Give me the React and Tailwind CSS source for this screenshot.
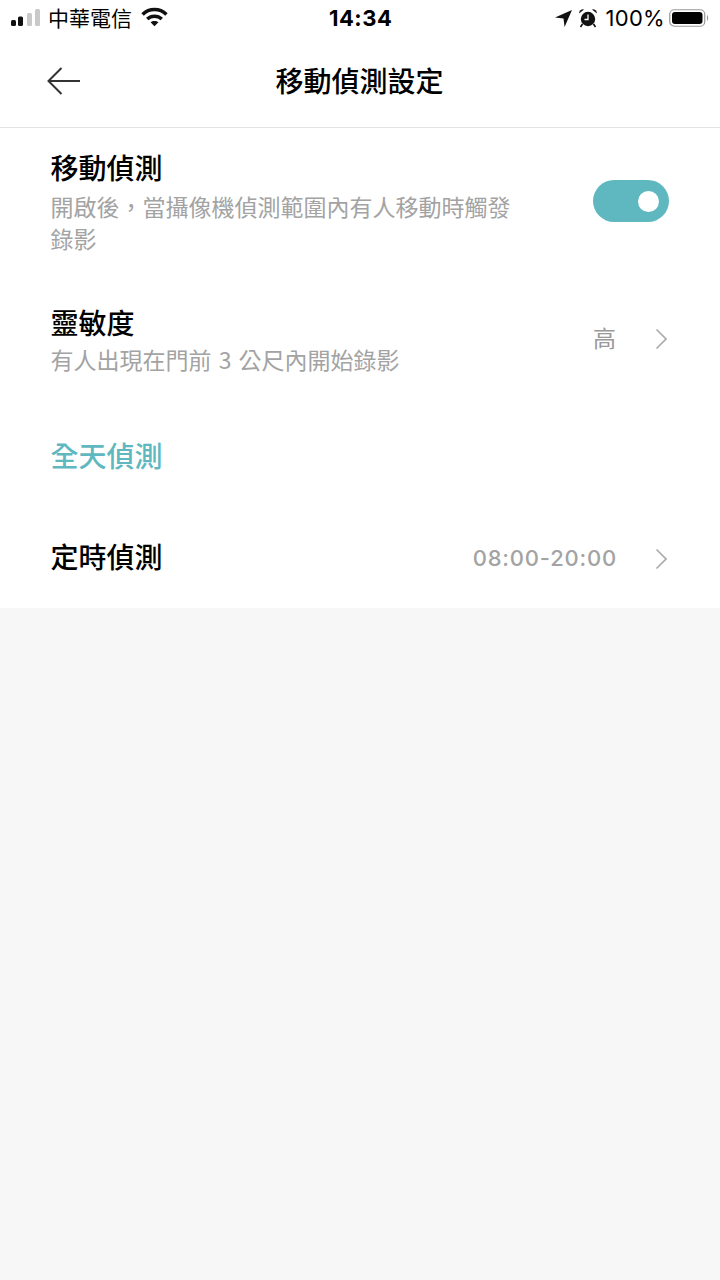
const font = { fontFamily: '"Noto Sans CJK TC", Inter, sans-serif' }

function Chevron() {
  return (
    <svg viewBox="0 0 12 22" className="w-3 h-[22px] ml-[39px]" fill="none" stroke="#aaaaaa" strokeWidth="1.6">
      <path d="M1.5 1.5 L11 11 L1.5 20.5" />
    </svg>
  )
}

function StatusBar() {
  return (
    <div className="h-9 flex items-center justify-between text-black relative">
      <div className="flex items-center">
        <svg viewBox="0 0 30 18" className="w-[30px] h-[18px] ml-[11px]">
          <rect x="0" y="11" width="5" height="6" rx="1.5" fill="#111" />
          <rect x="7" y="7.5" width="5" height="9.5" rx="1.5" fill="#111" />
          <rect x="16" y="4" width="5" height="13" rx="1.5" fill="#c9c9c9" />
          <rect x="24" y="0" width="5" height="17" rx="1.5" fill="#c9c9c9" />
        </svg>
        <span className="text-[21px] leading-none ml-[7px] -mt-[1px]">中華電信</span>
        <svg viewBox="0 0 26 19" className="w-[27px] h-[20px] ml-[9px] -mt-[3px]" fill="none" stroke="#111">
          <path d="M1.5 7 C8 0.8 18 0.8 24.5 7" strokeWidth="3.4" />
          <path d="M6 11.5 C10 7.8 16 7.8 20 11.5" strokeWidth="3.4" />
          <path d="M13 18.5 L9.2 14.6 C11.4 12.8 14.6 12.8 16.8 14.6 Z" fill="#111" stroke="none" />
        </svg>
      </div>
      <span className="absolute left-[329px] top-[6px] text-[22px] leading-[24px] font-bold tracking-[0.5px]" style={{ fontFamily: 'Inter, sans-serif' }}>14:34</span>
      <div className="flex items-center">
        <svg viewBox="0 0 16 16" className="w-[17px] h-[17px]">
          <path d="M16 0 L0 7 L8 8 L9 16 Z" fill="#111" />
        </svg>
        <svg viewBox="0 0 20 20" className="w-5 h-5 ml-[6px]">
          <circle cx="10" cy="11" r="7.2" fill="#111" />
          <path d="M1 5.5 A4 4 0 0 1 6 1.5 Z" fill="#111" />
          <path d="M19 5.5 A4 4 0 0 0 14 1.5 Z" fill="#111" />
          <path d="M4.5 16 L2.5 19 M15.5 16 L17.5 19" stroke="#111" strokeWidth="1.6" />
          <path d="M10 6.5 V11.5 H6.5" stroke="#fff" strokeWidth="1.3" fill="none" />
        </svg>
        <span className="text-[22px] leading-none ml-[7px] tracking-[0.3px]" style={{ fontFamily: 'Inter, sans-serif' }}>100%</span>
        <svg viewBox="0 0 44 20" className="w-11 h-5 ml-[4px] mr-[7px]">
          <rect x="0.75" y="1.75" width="35" height="16.5" rx="4.5" fill="none" stroke="#999" strokeWidth="1.2" />
          <rect x="3" y="4" width="30.5" height="12" rx="3" fill="#000" />
          <path d="M38 7 C39.5 7.5 39.5 12.5 38 13 Z" fill="#999" />
        </svg>
      </div>
    </div>
  )
}

export default function App() {
  return (
    <div className="w-[720px] h-[1280px] bg-[#f7f7f7] flex flex-col" style={font}>
      <div className="bg-white">
        <StatusBar />
        <header className="h-[92px] relative flex items-center justify-center border-b border-[#e3e3e3]">
          <svg viewBox="0 0 34 28" className="absolute left-[47px] top-[31px] w-[34px] h-7" fill="none" stroke="#333" strokeWidth="2">
            <path d="M33 14 H1.5 M14.5 1 L1.5 14 L14.5 27" />
          </svg>
          <h1 className="text-[28px] leading-none font-medium text-black -mt-[3px] -ml-[1px]">移動偵測設定</h1>
        </header>

        <div className="h-[152px] pl-[50.5px] pr-[51px] flex justify-between">
          <div>
            <p className="text-[28px] leading-[30px] font-medium text-black mt-[24px]">移動偵測</p>
            <p className="w-[470px] text-[23px] leading-[32px] text-[#a3a3a3] mt-[8px]">開啟後，當攝像機偵測範圍內有人移動時觸發錄影</p>
          </div>
          <div className="w-[76px] h-[42px] mt-[52px] rounded-full bg-[#5fb8c0] flex items-center justify-end pr-[10px]">
            <div className="w-[21px] h-[21px] rounded-full bg-white" />
          </div>
        </div>

        <div className="h-[123px] pb-[3px] pl-[50.5px] pr-[53px] flex justify-between items-center">
          <div>
            <p className="text-[28px] leading-[30px] font-medium text-black">靈敏度</p>
            <p className="text-[23px] leading-[30px] text-[#a3a3a3] mt-[7px] [word-spacing:2px]">有人出現在門前 3 公尺內開始錄影</p>
          </div>
          <div className="flex items-center text-[23px] text-[#999999] -mt-[2px]">
            <span className="-mt-[4px]">高</span>
            <Chevron />
          </div>
        </div>

        <div className="h-[104px] pl-[50.5px] flex items-center">
          <p className="text-[28px] font-medium text-[#5fb8c0]">全天偵測</p>
        </div>

        <div className="h-[101px] pb-[4px] pl-[50.5px] pr-[53px] flex justify-between items-center">
          <p className="text-[28px] font-medium text-black">定時偵測</p>
          <div className="flex items-center text-[22px] font-medium text-[#a3a3a3] tracking-[0.8px] mt-[6px]">
            <span className="-mr-[1px]" style={{ fontFamily: 'Inter, sans-serif' }}>08:00-20:00</span>
            <Chevron />
          </div>
        </div>
      </div>
    </div>
  )
}
